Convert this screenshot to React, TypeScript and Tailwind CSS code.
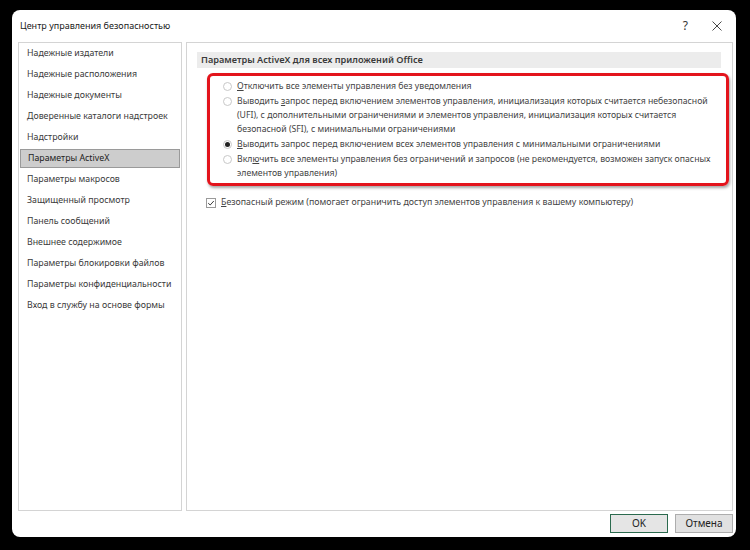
import React from "react";

const menu = [
  "Надежные издатели",
  "Надежные расположения",
  "Надежные документы",
  "Доверенные каталоги надстроек",
  "Надстройки",
  "Параметры ActiveX",
  "Параметры макросов",
  "Защищенный просмотр",
  "Панель сообщений",
  "Внешнее содержимое",
  "Параметры блокировки файлов",
  "Параметры конфиденциальности",
  "Вход в службу на основе формы",
];

const Radio = ({ checked }: { checked?: boolean }) => (
  <span className="mt-[3px] flex h-[9px] w-[9px] shrink-0 items-center justify-center rounded-full border border-[#c8c8c8] bg-white">
    {checked && <span className="h-[5px] w-[5px] rounded-full bg-[#222]" />}
  </span>
);

const Option = ({ checked, children }: { checked?: boolean; children: React.ReactNode }) => (
  <div className="flex gap-[5px] pl-[13px]">
    <Radio checked={checked} />
    <div className="whitespace-nowrap leading-[14px]">{children}</div>
  </div>
);

export default function App() {
  return (
    <div
      className="h-[550px] w-[750px] bg-black pl-[12px] pt-[10px]"
      style={{ fontFamily: '"Noto Sans", "Open Sans", sans-serif' }}
    >
      <div className="flex h-[527px] w-[724px] flex-col rounded-[8px] bg-white">
        {/* Title bar */}
        <div className="flex h-[32px] items-center justify-between pl-[8px] pr-[14px] text-[9px] text-[#1a1a1a]">
          <span>Центр управления безопасностью</span>
          <div className="flex items-center gap-[24px] text-[#333]">
            <span className="text-[12px]">?</span>
            <svg viewBox="0 0 10 10" className="h-[10px] w-[10px]">
              <path d="M0.5 0.5 L9.5 9.5 M9.5 0.5 L0.5 9.5" stroke="#333" strokeWidth="0.9" />
            </svg>
          </div>
        </div>

        {/* Body */}
        <div className="flex h-[469px] gap-[4px] pl-[6px] pr-[3px]">
          {/* Left nav */}
          <div className="w-[164px] shrink-0 border border-[#d4d4d4] text-[8.8px] text-[#3a3a3a]">
            {menu.map((m) =>
              m === "Параметры ActiveX" ? (
                <div key={m} className="flex h-[21px] items-center px-[1px]">
                  <div className="flex h-[19px] w-full items-center whitespace-nowrap border border-[#9a9a9a] bg-[#cdcdcd] pl-[7px] text-[#222]">
                    {m}
                  </div>
                </div>
              ) : (
                <div key={m} className="flex h-[21px] items-center whitespace-nowrap pl-[8px]">
                  {m}
                </div>
              )
            )}
          </div>

          {/* Right content */}
          <div className="min-w-0 flex-1 border border-[#d4d4d4] pl-[10px] pr-[11px] pt-[9px]">
            <div className="flex h-[16px] items-center bg-[#ececec] pl-[4px] text-[9.2px] font-semibold text-[#3a3a3a]">
              Параметры ActiveX для всех приложений Office
            </div>

            <div className="ml-[10px] mr-[-8px] mt-[5px] flex flex-col gap-[1px] rounded-[6px] border-[3px] border-[#e3141c] pb-[3px] pt-[3px] text-[8.7px] text-[#444] shadow-[1px_2px_3px_rgba(0,0,0,0.35)]">
              <Option>
                <span className="underline">О</span>тключить все элементы управления без уведомления
              </Option>
              <Option>
                Выводить <span className="underline">з</span>апрос перед включением элементов управления, инициализация которых считается небезопасной
                <br />
                (UFI), с дополнительными ограничениями и элементов управления, инициализация которых считается
                <br />
                безопасной (SFI), с минимальными ограничениями
              </Option>
              <Option checked>
                <span className="underline">В</span>ыводить запрос перед включением всех элементов управления с минимальными ограничениями
              </Option>
              <Option>
                Вкл<span className="underline">ю</span>чить все элементы управления без ограничений и запросов (не рекомендуется, возможен запуск опасных
                <br />
                элементов управления)
              </Option>
            </div>

            <div className="ml-[9px] mt-[10px] flex items-center gap-[5px] text-[8.8px] text-[#444]">
              <span className="flex h-[10px] w-[10px] items-center justify-center border border-[#9a9a9a] bg-white">
                <svg viewBox="0 0 10 10" className="h-[8px] w-[8px]">
                  <path d="M1.5 5.2 L4 7.5 L8.5 2.5" fill="none" stroke="#333" strokeWidth="1.2" />
                </svg>
              </span>
              <span className="whitespace-nowrap">
                <span className="underline">Б</span>езопасный режим (помогает ограничить доступ элементов управления к вашему компьютеру)
              </span>
            </div>
          </div>
        </div>

        {/* Buttons */}
        <div className="flex justify-end gap-[7px] pr-[3px] pt-[3px]">
          <button className="h-[19px] w-[58px] border-[1.5px] border-[#2b6a4e] bg-[#e5e5e5] text-[10px] text-[#222]">
            OK
          </button>
          <button className="h-[19px] w-[58px] border border-[#adadad] bg-[#e1e1e1] text-[10px] text-[#222]">
            Отмена
          </button>
        </div>
      </div>
    </div>
  );
}
